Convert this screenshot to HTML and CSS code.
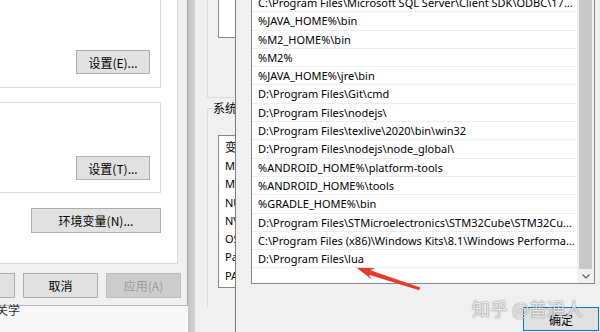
FILE: index.html
```html
<!DOCTYPE html>
<html lang="zh-CN">
<head>
    <meta charset="UTF-8">
    <meta name="viewport" content="width=device-width, initial-scale=1.0">
    <title>编辑环境变量</title>
    <link rel="stylesheet" href="styles.css">
</head>
<body>
    <div class="screen">
        <!-- 系统属性 -->
        <div class="sys-col">
            <div class="sys-dialog">
                <div class="tab-page">
                    <div class="group group-top">
                        <button class="btn">设置(E)...</button>
                    </div>
                    <div class="group group-mid">
                        <button class="btn">设置(T)...</button>
                    </div>
                    <div class="env-row">
                        <button class="btn btn-wide">环境变量(N)...</button>
                    </div>
                </div>
                <div class="dialog-buttons">
                    <button class="btn">确定</button>
                    <button class="btn">取消</button>
                    <button class="btn" disabled>应用(A)</button>
                </div>
            </div>
            <div class="behind">关学</div>
        </div>

        <div class="shadow"></div>

        <!-- 环境变量 -->
        <div class="env-col">
            <div class="env-group env-user">
                <div class="list list-user"></div>
            </div>
            <div class="env-group env-sys">
                <span class="legend">系统变量(S)</span>
                <div class="list list-sys">
                    <div class="list-head">变量</div>
                    <div class="list-item">M2</div>
                    <div class="list-item">M2_HOME</div>
                    <div class="list-item">NUMBER_OF_PROCESSORS</div>
                    <div class="list-item">NVM_HOME</div>
                    <div class="list-item">OS</div>
                    <div class="list-item">Path</div>
                    <div class="list-item">PATHEXT</div>
                </div>
            </div>
        </div>

        <!-- 编辑环境变量 -->
        <div class="edit-col">
            <div class="path-list">
                <div class="path-rows">
                    <div class="path-row">C:\Program Files\Microsoft SQL Server\Client SDK\ODBC\17...</div>
                    <div class="path-row">%JAVA_HOME%\bin</div>
                    <div class="path-row">%M2_HOME%\bin</div>
                    <div class="path-row">%M2%</div>
                    <div class="path-row">%JAVA_HOME%\jre\bin</div>
                    <div class="path-row">D:\Program Files\Git\cmd</div>
                    <div class="path-row">D:\Program Files\nodejs\</div>
                    <div class="path-row">D:\Program Files\texlive\2020\bin\win32</div>
                    <div class="path-row">D:\Program Files\nodejs\node_global\</div>
                    <div class="path-row">%ANDROID_HOME%\platform-tools</div>
                    <div class="path-row">%ANDROID_HOME%\tools</div>
                    <div class="path-row">%GRADLE_HOME%\bin</div>
                    <div class="path-row">D:\Program Files\STMicroelectronics\STM32Cube\STM32Cu...</div>
                    <div class="path-row">C:\Program Files (x86)\Windows Kits\8.1\Windows Performa...</div>
                    <div class="path-row">D:\Program Files\lua</div>
                </div>
                <div class="scrollbar">
                    <div class="thumb"></div>
                    <div class="scroll-arrow">
                        <svg width="8" height="5" viewBox="0 0 8 5"><path d="M0.5 0.5 L4 4 L7.5 0.5" fill="none" stroke="#606060" stroke-width="1.2"/></svg>
                    </div>
                </div>
            </div>
            <div class="edit-footer">
                <button class="btn btn-default">确定</button>
            </div>
        </div>

        <svg class="arrow-mark" width="600" height="332" viewBox="0 0 600 332">
            <polygon points="356.5,267.8 375.5,268.2 370.3,270.3 420.2,287.6 419.2,290.2 368.9,274.8 372,279.4" fill="#e63b2b"/>
        </svg>
        <div class="watermark">知乎 @普通人</div>
    </div>
</body>
</html>
```

FILE: styles.css
```css
:root {
    --dialog-bg: #f0f0f0;
    --btn-bg: #e1e1e1;
    --btn-border: #adadad;
    --group-line: #dcdcdc;
    --list-border: #828790;
    --row-line: #ededed;
    --row-height: 18.3px;
}

* {
    margin: 0;
    padding: 0;
    box-sizing: border-box;
}

body {
    width: 600px;
    height: 332px;
    overflow: hidden;
    background-color: #f7f7f7;
    font-family: "Noto Sans CJK SC", sans-serif;
    font-size: 12px;
    color: #000;
}

.screen {
    position: relative;
    display: flex;
    width: 600px;
    height: 332px;
    overflow: hidden;
}

/* buttons */
.btn {
    width: 74px;
    height: 24px;
    font-family: "Noto Sans CJK SC", sans-serif;
    font-size: 12px;
    color: #000;
    background-color: var(--btn-bg);
    border: 1px solid var(--btn-border);
    flex-shrink: 0;
}

.btn:disabled {
    background-color: #cccccc;
    border-color: #bfbfbf;
    color: #9a9a9a;
}

.btn-wide {
    width: 130px;
    height: 25px;
}

.btn-default {
    width: 76px;
    border-color: #0078d7;
}

/* system properties dialog */
.sys-col {
    width: 188px;
    display: flex;
    flex-direction: column;
    flex-shrink: 0;
}

.sys-dialog {
    height: 306px;
    background-color: var(--dialog-bg);
    border-right: 1px solid #a6a6a6;
    border-bottom: 1px solid #b4b4b4;
}

.tab-page {
    width: 178px;
    height: 264px;
    background-color: #fff;
    border-right: 1px solid #d9d9d9;
    border-bottom: 1px solid #d9d9d9;
    display: flex;
    flex-direction: column;
}

.group {
    width: 161px;
    border: 1px solid var(--group-line);
    border-left: none;
    display: flex;
    justify-content: flex-end;
    align-items: flex-end;
    padding-right: 10px;
}

.group-top {
    margin-top: -10px;
    height: 98px;
    padding-bottom: 13px;
}

.group-mid {
    margin-top: 14px;
    height: 91px;
    padding-bottom: 12px;
}

.env-row {
    margin-top: 15px;
    display: flex;
    justify-content: flex-end;
    padding-right: 16px;
}

.dialog-buttons {
    margin-top: 9px;
    display: flex;
    justify-content: flex-end;
    gap: 8px;
    padding-right: 6px;
}

.dialog-buttons .btn {
    width: 75px;
    height: 25px;
}

.behind {
    margin-top: -3px;
    margin-left: -4px;
    font-size: 12px;
    line-height: 14px;
    color: #333;
}

.shadow {
    width: 7px;
    flex-shrink: 0;
    background: linear-gradient(to right, #c2c2c2, #d4d4d4);
}

/* environment variables dialog */
.env-col {
    width: 40px;
    flex-shrink: 0;
    overflow: hidden;
    background-color: var(--dialog-bg);
    display: flex;
    flex-direction: column;
}

.env-group {
    width: 300px;
    margin-left: 12px;
    border-left: 1px solid var(--group-line);
    flex-shrink: 0;
}

.env-user {
    margin-top: -10px;
    height: 108px;
    border-bottom: 1px solid var(--group-line);
}

.env-sys {
    margin-top: 10px;
    height: 200px;
    border-top: 1px solid var(--group-line);
}

.legend {
    display: inline-block;
    margin-top: -8px;
    margin-left: 5px;
    line-height: 14px;
    background-color: var(--dialog-bg);
    vertical-align: top;
}

.list {
    width: 280px;
    margin-left: 10px;
    background-color: #fff;
    border: 1px solid var(--list-border);
}

.list-user {
    height: 48px;
}

.list-sys {
    margin-top: 9px;
    height: 153px;
}

.list-head {
    height: 21px;
    line-height: 21px;
    padding-left: 6px;
}

.list-item {
    height: var(--row-height);
    line-height: var(--row-height);
    padding-left: 6px;
    font-family: "Noto Sans", sans-serif;
    font-size: 11px;
}

/* edit environment variable dialog */
.edit-col {
    flex: 1;
    background-color: var(--dialog-bg);
    border-left: 1px solid #7d7d7d;
    display: flex;
    flex-direction: column;
}

.path-list {
    width: 344px;
    height: 291px;
    margin-top: -7px;
    margin-left: 15px;
    background-color: #fff;
    border: 1px solid var(--list-border);
    display: flex;
    flex-shrink: 0;
}

.path-rows {
    flex: 1;
}

.path-row {
    height: var(--row-height);
    line-height: 17px;
    padding-left: 6px;
    border-bottom: 1px solid var(--row-line);
    font-family: "Noto Sans", sans-serif;
    font-size: 11px;
    white-space: nowrap;
    overflow: hidden;
}

.scrollbar {
    width: 17px;
    background-color: #f0f0f0;
    display: flex;
    flex-direction: column;
}

.thumb {
    flex: 1;
    margin: 0 2px;
    background-color: #c8c8c8;
}

.scroll-arrow {
    height: 14px;
    display: flex;
    justify-content: center;
    align-items: center;
}

.edit-footer {
    display: flex;
    justify-content: flex-end;
    padding-top: 23px;
    padding-right: 1px;
}

/* overlays */
.arrow-mark {
    position: absolute;
    left: 0;
    top: 0;
    pointer-events: none;
}

.watermark {
    position: absolute;
    left: 472px;
    top: 299px;
    font-size: 18px;
    line-height: 18px;
    color: rgba(255, 255, 255, 0.85);
    text-shadow: 0 0 1px rgba(0, 0, 0, 0.5), 0 0 2px rgba(0, 0, 0, 0.25);
    white-space: nowrap;
}
```
